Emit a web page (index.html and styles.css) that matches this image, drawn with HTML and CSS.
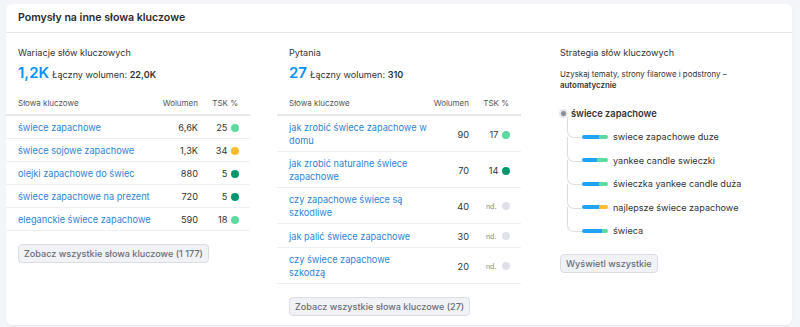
FILE: index.html
```html
<!DOCTYPE html>
<html lang="pl">
<head>
    <meta charset="UTF-8">
    <title>Pomysły na inne słowa kluczowe</title>
    <link rel="stylesheet" href="styles.css">
</head>
<body>
    <div class="card">
        <div class="card-header">
            <h2>Pomysły na inne słowa kluczowe</h2>
        </div>
        <div class="card-body">
            <!-- Wariacje -->
            <div class="column">
                <div class="section-title">Wariacje słów kluczowych</div>
                <div class="summary">
                    <span class="big-number">1,2K</span>
                    <span class="total">Łączny wolumen: <b>22,0K</b></span>
                </div>
                <table class="kw-table">
                    <colgroup><col><col class="col-vol"><col class="col-kd"></colgroup>
                    <thead>
                        <tr><th>Słowa kluczowe</th><th class="num">Wolumen</th><th class="num kd">TSK %</th></tr>
                    </thead>
                    <tbody>
                        <tr><td><a href="#">świece zapachowe</a></td><td class="num">6,6K</td><td class="kd">25 <i class="dot easy"></i></td></tr>
                        <tr><td><a href="#">świece sojowe zapachowe</a></td><td class="num">1,3K</td><td class="kd">34 <i class="dot medium"></i></td></tr>
                        <tr><td><a href="#">olejki zapachowe do świec</a></td><td class="num">880</td><td class="kd">5 <i class="dot very-easy"></i></td></tr>
                        <tr><td><a href="#">świece zapachowe na prezent</a></td><td class="num">720</td><td class="kd">5 <i class="dot very-easy"></i></td></tr>
                        <tr><td><a href="#">eleganckie świece zapachowe</a></td><td class="num">590</td><td class="kd">18 <i class="dot easy"></i></td></tr>
                    </tbody>
                </table>
                <button class="btn">Zobacz wszystkie słowa kluczowe (1 177)</button>
            </div>

            <!-- Pytania -->
            <div class="column">
                <div class="section-title">Pytania</div>
                <div class="summary">
                    <span class="big-number">27</span>
                    <span class="total">Łączny wolumen: <b>310</b></span>
                </div>
                <table class="kw-table">
                    <colgroup><col><col class="col-vol"><col class="col-kd"></colgroup>
                    <thead>
                        <tr><th>Słowa kluczowe</th><th class="num">Wolumen</th><th class="num kd">TSK %</th></tr>
                    </thead>
                    <tbody>
                        <tr><td><a href="#">jak zrobić świece zapachowe w domu</a></td><td class="num">90</td><td class="kd">17 <i class="dot easy"></i></td></tr>
                        <tr><td><a href="#">jak zrobić naturalne świece zapachowe</a></td><td class="num">70</td><td class="kd">14 <i class="dot very-easy"></i></td></tr>
                        <tr><td><a href="#">czy zapachowe świece są szkodliwe</a></td><td class="num">40</td><td class="kd"><span class="na">nd.</span> <i class="dot none"></i></td></tr>
                        <tr><td><a href="#">jak palić świece zapachowe</a></td><td class="num">30</td><td class="kd"><span class="na">nd.</span> <i class="dot none"></i></td></tr>
                        <tr><td><a href="#">czy świece zapachowe szkodzą</a></td><td class="num">20</td><td class="kd"><span class="na">nd.</span> <i class="dot none"></i></td></tr>
                    </tbody>
                </table>
                <button class="btn">Zobacz wszystkie słowa kluczowe (27)</button>
            </div>

            <!-- Strategia -->
            <div class="column">
                <div class="section-title">Strategia słów kluczowych</div>
                <p class="strategy-text">Uzyskaj tematy, strony filarowe i podstrony – <b>automatycznie</b></p>
                <div class="tree">
                    <div class="tree-root"><i class="root-dot"></i>świece zapachowe</div>
                    <ul class="tree-children">
                        <li><span class="bar"><i class="seg blue" style="width:17px"></i><i class="seg green"></i></span>swiece zapachowe duze</li>
                        <li><span class="bar"><i class="seg blue" style="width:15px"></i><i class="seg green"></i></span>yankee candle swieczki</li>
                        <li><span class="bar"><i class="seg blue" style="width:17px"></i><i class="seg green"></i></span>świeczka yankee candle duża</li>
                        <li><span class="bar"><i class="seg blue" style="width:17px"></i><i class="seg yellow"></i></span>najlepsze świece zapachowe</li>
                        <li><span class="bar"><i class="seg blue" style="width:20px"></i><i class="seg green"></i></span>świeca</li>
                    </ul>
                </div>
                <button class="btn btn-tree">Wyświetl wszystkie</button>
            </div>
        </div>
    </div>
</body>
</html>
```

FILE: styles.css
```css
body {
    margin: 0;
    padding: 4px 8px 2px 6px;
    background: #f4f5f9;
    font-family: Inter, 'Noto Sans', sans-serif;
    color: #333;
}

.card {
    background: #fff;
    border-radius: 6px;
    box-shadow: 0 1px 2px rgba(0, 0, 0, 0.06);
    height: 321px;
}

.card-header {
    padding: 6px 12px;
    border-bottom: 1px solid #e6e7ec;
}

.card-header h2 {
    margin: 0;
    font-size: 10.6px;
    line-height: 16px;
    font-weight: 600;
    color: #2b2b2b;
}

.card-body {
    display: grid;
    grid-template-columns: repeat(3, 244px);
    column-gap: 27px;
    padding-top: 12px;
}

.column {
    padding: 0 12px;
}

.section-title {
    font-size: 9.1px;
    line-height: 15px;
    color: #333;
}

.summary {
    margin-top: 2px;
    display: flex;
    align-items: baseline;
    gap: 3px;
}

.big-number {
    font-size: 15px;
    line-height: 22px;
    font-weight: 600;
    color: #0b8ffc;
}

.total {
    font-size: 9.1px;
    color: #333;
}

.total b {
    font-weight: 600;
}

/* tabela */
.kw-table {
    width: calc(100% + 24px);
    margin: 13px -12px 0;
    border-collapse: collapse;
    table-layout: fixed;
}

.col-vol {
    width: 41px;
}

.col-kd {
    width: 52px;
}

.kw-table th {
    font-size: 8px;
    line-height: 12px;
    font-weight: 400;
    color: #555;
    text-align: left;
    padding: 0 0 5px 12px;
    border-bottom: 2px solid #e6e7ec;
}

.kw-table td {
    font-size: 9.2px;
    line-height: 13px;
    padding: 5px 0 4px 12px;
    border-bottom: 1px solid #eeeff2;
    vertical-align: middle;
}

.kw-table a {
    color: #2e84d6;
    text-decoration: none;
}

.kw-table .num {
    text-align: right;
    padding-left: 0;
}

.kw-table .kd {
    text-align: right;
    padding-right: 11px;
    white-space: nowrap;
}

.kw-table th.kd {
    padding-right: 12px;
}

.na {
    font-size: 7px;
    color: #888;
    margin-right: 2px;
}

.dot {
    display: inline-block;
    width: 8px;
    height: 8px;
    border-radius: 50%;
    margin-left: 1px;
    vertical-align: -1px;
}

.dot.easy { background: #5dda9f; }
.dot.medium { background: #ffbb2e; }
.dot.very-easy { background: #00976f; }
.dot.none { background: #e0e1e8; }

.btn {
    display: inline-block;
    margin-top: 13px;
    padding: 2px 5px;
    font-family: inherit;
    font-size: 9.1px;
    line-height: 13px;
    font-weight: 500;
    color: #6b6d78;
    background: #f1f2f5;
    border: 1px solid #dcdde3;
    border-radius: 4px;
}

.btn-tree {
    margin-top: 11px;
}

/* strategia */
.strategy-text {
    margin: 9px 0 0;
    font-size: 7.9px;
    line-height: 11px;
    color: #333;
}

.strategy-text b {
    font-weight: 600;
}

.tree {
    margin-top: 11px;
}

.tree-root {
    display: flex;
    align-items: center;
    height: 23px;
    font-size: 9.3px;
    font-weight: 600;
    color: #333;
}

.root-dot {
    width: 5px;
    height: 5px;
    border-radius: 50%;
    background: #8a8c95;
    box-shadow: 0 0 0 2px #e4e5ea;
    margin: 0 5px 0 1px;
}

.tree-children {
    list-style: none;
    margin: 0 0 0 7px;
    padding: 0;
}

.tree-children li {
    position: relative;
    display: flex;
    align-items: center;
    height: 23.5px;
    padding-left: 15px;
    font-size: 9.1px;
    color: #333;
}

.tree-children li::before {
    content: '';
    position: absolute;
    left: 0;
    top: -12px;
    width: 14px;
    height: 24px;
    border-left: 1px solid #dddee4;
    border-bottom: 1px solid #dddee4;
    border-bottom-left-radius: 7px;
}

.tree-children li:first-child::before {
    top: -8px;
    height: 20px;
}

.bar {
    display: flex;
    width: 26px;
    height: 4px;
    border-radius: 2px;
    overflow: hidden;
    margin-right: 5px;
}

.seg {
    height: 100%;
}

.seg.blue { background: #1ea3ff; }
.seg.green { flex: 1; background: #5dda9f; }
.seg.yellow { flex: 1; background: #ffbb2e; }
```
